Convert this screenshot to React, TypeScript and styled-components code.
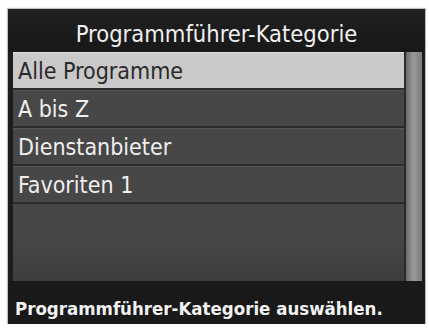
import React from 'react';
import styled, { createGlobalStyle } from 'styled-components';

const GlobalStyle = createGlobalStyle`
  html, body {
    margin: 0;
    padding: 0;
    background: #ffffff;
  }
`;

const Screen = styled.div`
  box-sizing: border-box;
  margin: 9px 0 0 8px;
  width: 417px;
  height: 315px;
  background: #1d1d1d;
  display: flex;
  flex-direction: column;
  font-family: 'DejaVu Sans Condensed', 'DejaVu Sans', sans-serif;
  font-stretch: condensed;
  box-shadow: 0 0 1px 1px rgba(0, 0, 0, 0.25);
`;

const Header = styled.div`
  height: 43px;
  display: flex;
  align-items: center;
  justify-content: center;
  color: #f0f0f0;
  font-size: 23.5px;
  padding-top: 7px;
  box-sizing: border-box;
  background: linear-gradient(#202020, #181818);
`;

const Body = styled.div`
  flex: 1;
  display: flex;
  padding-left: 5px;
  background: #1d1d1d;
`;

const List = styled.div`
  flex: 1;
  display: flex;
  flex-direction: column;
  background: linear-gradient(#474747 80%, #3e3e3e);
`;

const Row = styled.div<{ selected?: boolean }>`
  box-sizing: border-box;
  height: 38px;
  display: flex;
  align-items: center;
  padding-left: 5px;
  font-size: 23px;
  color: ${({ selected }) => (selected ? '#2a2a2a' : '#efefef')};
  background: ${({ selected }) => (selected ? '#c9c9c9' : '#474747')};
  border-top: 1px solid ${({ selected }) => (selected ? '#dcdcdc' : '#565656')};
  border-bottom: 2px solid #2c2c2c;
`;

const Scrollbar = styled.div`
  width: 21px;
  display: flex;
  border-left: 2px solid #2a2a2a;
  border-right: 3px solid #1d1d1d;
  box-sizing: border-box;
`;

const Track = styled.div`
  flex: 1;
  background: linear-gradient(90deg, #6a6a6a, #9a9a9a 45%, #7e7e7e);
`;

const Footer = styled.div`
  box-sizing: border-box;
  height: 43px;
  display: flex;
  align-items: flex-end;
  padding: 0 0 5px 7px;
  color: #f2f2f2;
  font-size: 18.5px;
  font-weight: bold;
  background: #191919;
`;

const items = ['Alle Programme', 'A bis Z', 'Dienstanbieter', 'Favoriten 1'];

const App = () => (
  <>
    <GlobalStyle />
    <Screen>
      <Header>Programmführer-Kategorie</Header>
      <Body>
        <List>
          {items.map((label, i) => (
            <Row key={label} selected={i === 0}>
              {label}
            </Row>
          ))}
        </List>
        <Scrollbar>
          <Track />
        </Scrollbar>
      </Body>
      <Footer>Programmführer-Kategorie auswählen.</Footer>
    </Screen>
  </>
);

export default App;
